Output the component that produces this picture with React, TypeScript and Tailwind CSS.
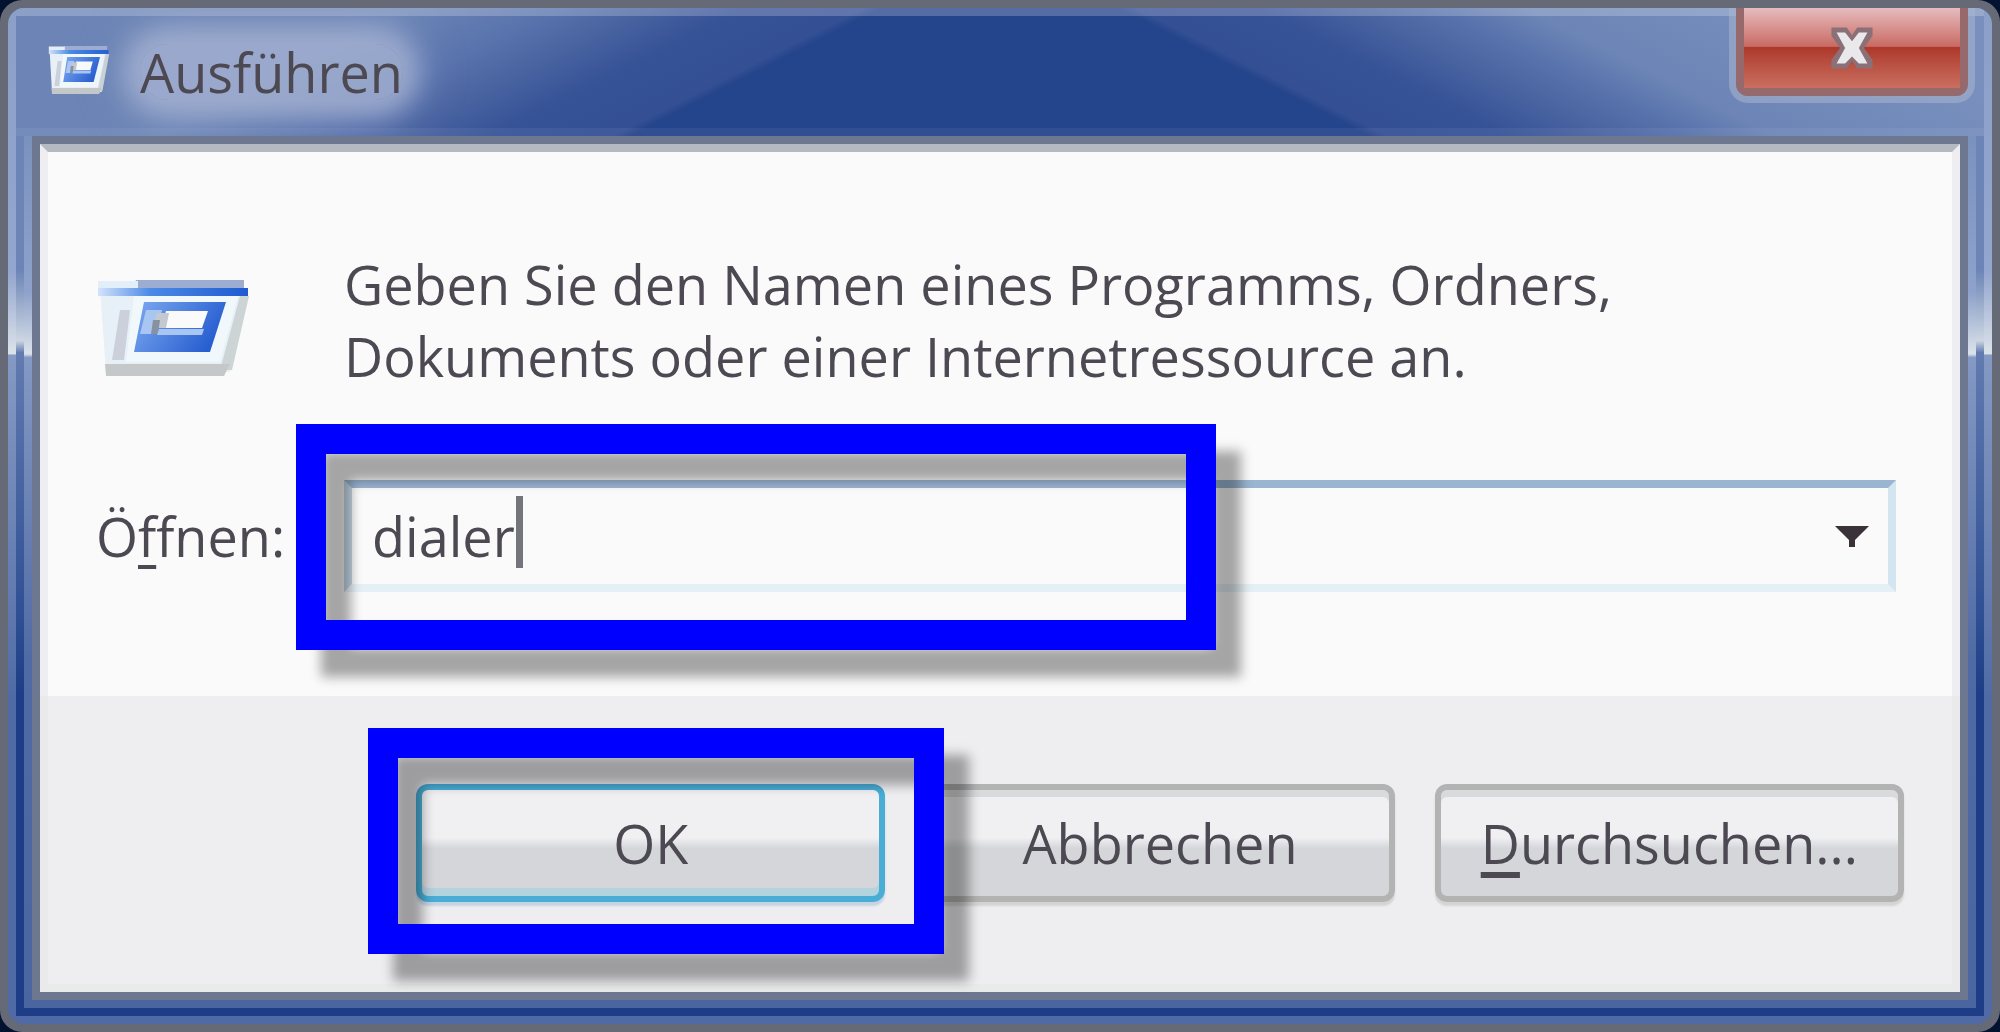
import type { ReactNode } from "react";
import clsx from "clsx";

interface DialogButtonProps {
  children: ReactNode;
  isDefault?: boolean;
}

interface RunIconProps {
  className: string;
}

const RunIcon = ({ className }: RunIconProps) => (
  <svg viewBox="0 0 160 104" preserveAspectRatio="none" className={className} aria-hidden="true">
    <defs>
      <linearGradient id="runBar" x1="0" x2="1">
        <stop offset="0" stopColor="#d3e3fa" />
        <stop offset="0.35" stopColor="#4b8ae6" />
        <stop offset="1" stopColor="#1f5bd0" />
      </linearGradient>
      <linearGradient id="runRing" x1="0" x2="1" y2="0.4">
        <stop offset="0" stopColor="#7eaaf0" />
        <stop offset="1" stopColor="#285fd0" />
      </linearGradient>
    </defs>
    <path d="M4 8H152L134 92H10Z" fill="#e6f0f6" />
    <path d="M144 16H153L136 90H124Z" fill="#cdd4d6" />
    <path d="M24 30H34L28 80H16Z" fill="#ccd0da" />
    <path d="M38 16H142L124 82H30Z" fill="#f1f8fc" />
    <path d="M9 84H134L128 96H10Z" fill="#c5c8c8" />
    <path d="M40 0H148V8H36Z" fill="#9dadd2" />
    <path d="M2 1H42V8H2Z" fill="#e2eef8" />
    <path d="M2 8H152V16H2Z" fill="url(#runBar)" />
    <path d="M48 22H130L114 72H38Z" fill="url(#runRing)" />
    <path d="M70 31H112L106 48H66Z" fill="#fafafa" />
    <path d="M50 30H66L60 54H44Z" fill="#a9c6f2" />
    <path d="M61 33H73L70 48H57Z" fill="#c3c9cf" />
    <path d="M57 40H64L62 54H55Z" fill="#8791a0" />
    <path d="M63 49H108L106 55H61Z" fill="#a9c6f2" />
  </svg>
);

const CloseIcon = () => (
  <svg viewBox="0 0 56 52" className="size-12" aria-hidden="true">
    <path
      d="M4 2H22L28 11L34 2H52V12L42 26L52 40V50H34L28 41L22 50H4V40L14 26L4 12Z"
      fill="#8b7078"
    />
    <path d="M10 8H20L28 18L36 8H46L36 26L46 44H36L28 36L20 44H10L20 26Z" fill="#e9e8ea" />
  </svg>
);

// Markierung um ein Element
const Highlight = ({ className }: { className: string }) => (
  <div
    className={clsx(
      "pointer-events-none absolute z-10 border-[30px] border-[#0000ff] drop-shadow-[25px_27px_6px_rgba(0,0,0,0.34)]",
      className,
    )}
  />
);

const DialogButton = ({ children, isDefault = false }: DialogButtonProps) => (
  <button
    type="button"
    className={clsx(
      "h-[118px] w-full rounded-[12px] border-[6px] bg-linear-to-b from-[#f0f0f3] from-45% to-[#d4d6d9] to-55%",
      isDefault
        ? "border-[#49add6] shadow-[inset_0_-8px_#b3d3de,0_4px_2px_#c5d4e2]"
        : "border-[#b3b3b4] shadow-[inset_0_7px_#d9dadb,0_4px_2px_#d4d4d2]",
    )}
  >
    {children}
  </button>
);

const TitleBar = () => (
  <header className="flex h-32 items-start justify-between bg-[linear-gradient(153deg,#6c85b6_180px,#5973ad_245px,#4862a0_290px,#365397_330px,#344f94_385px,#24458b_393px),linear-gradient(207deg,#7990be_80px,#6c85b6_210px,#5973ad_245px,#4862a0_290px,#365397_330px,#344f94_385px,#24458b_393px)] bg-[length:50.1%_100%] [background-position:left,right] bg-no-repeat pr-4 pl-8 shadow-[inset_0_8px_rgba(255,255,255,0.22),inset_0_-8px_rgba(255,255,255,0.06)]">
    <div className="flex h-full items-center">
      <RunIcon className="h-13 w-16" />
      <h1 className="ml-7 rounded-full bg-[#a8b4d3]/75 leading-[56px] shadow-[0_0_24px_16px_rgba(168,180,211,0.75),0_0_48px_20px_rgba(168,180,211,0.3)]">
        Ausführen
      </h1>
    </div>
    <button
      type="button"
      aria-label="Schließen"
      className="flex h-[88px] w-[232px] items-center justify-center rounded-b-[12px] border-x-8 border-b-8 border-[#966a6d] bg-linear-to-b from-[#e5bcbe] via-[#c96c66] via-47% to-[#cf7a6a] shadow-[0_0_0_7px_rgba(170,180,205,0.55)]"
    >
      <span className="flex h-full w-full items-center justify-center bg-linear-to-b from-transparent from-48% via-[#ad382b] via-49% to-[#c96f60]">
        <CloseIcon />
      </span>
    </button>
  </header>
);

const App = () => {
  return (
    <div className="min-h-screen bg-[#03122e] font-['Open_Sans','Noto_Sans',sans-serif] text-[54px] leading-[72px] text-[#4d4952] [font-variant-ligatures:none]">
      <div className="flex min-h-screen flex-col rounded-[22px] bg-[#656a76] p-2">
        {/* Glasrahmen */}
        <div className="flex flex-1 flex-col overflow-hidden rounded-[16px] bg-[linear-gradient(#8c9fc9,#93a6cf_26%,#dbe2ea_34%,#8499c4_34.2%,#5e78ae_60%,#506aa5_68%)] px-2 pb-2">
          <div className="flex flex-1 flex-col bg-[linear-gradient(#6c85b6_26%,#ccd6e2_33%,#627bb0_34.2%,#2f5094_60%,#1d3d86_68%)] pb-2">
            <TitleBar />
            <div className="mx-2 flex flex-1 flex-col bg-[linear-gradient(#7b92bf,#8ea2cb_18%,#dbe2ea_25%,#8499c4_25.4%,#506aa5_60%,#4a659f_100%)] px-2 pb-2">
              <form
                className="flex flex-1 flex-col border-8 border-[#6d7790]"
                onSubmit={(e) => e.preventDefault()}
              >
                <main className="grid grid-cols-[248px_1fr] items-center gap-y-22 border-x-8 border-t-8 border-x-[#eeeef2] border-t-[#b5b9c2] bg-[#fafafa] pt-24 pr-14 pb-26 pl-12">
                  <RunIcon className="mt-6 h-26 w-40" />
                  <p>
                    Geben Sie den Namen eines Programms, Ordners,
                    <br />
                    Dokuments oder einer Internetressource an.
                  </p>

                  <label htmlFor="command">
                    Ö<span className="underline decoration-4 underline-offset-8">f</span>fnen:
                  </label>
                  <div className="relative flex h-28 border-8 border-t-[#9ab5d2] border-r-[#d3e5f1] border-b-[#e5f0f6] border-l-[#c3d5e3]">
                    <input
                      id="command"
                      type="text"
                      defaultValue="dialer"
                      className="min-w-0 flex-1 bg-transparent pl-5 outline-none"
                    />
                    {/* Textcursor */}
                    <span className="absolute top-2 left-41 h-18 w-[7px] bg-[#74747b]" />
                    <button type="button" aria-label="Verlauf" className="flex w-18 items-center justify-center">
                      <svg viewBox="0 0 40 24" className="h-6 w-10" aria-hidden="true">
                        <path d="M3 2H37L31 8L23 16V23H17V16L9 8Z" fill="#3a3238" />
                      </svg>
                    </button>
                    <Highlight className="-top-16 -left-14 h-[226px] w-[920px]" />
                  </div>
                </main>

                <footer className="grid flex-1 grid-cols-3 gap-10 border-x-8 border-b-8 border-[#e8ebea] bg-[#eeeef1] pt-22 pr-12 pb-18 pl-[368px]">
                  <div className="relative">
                    <DialogButton isDefault>OK</DialogButton>
                    <Highlight className="-top-14 -left-12 h-[226px] w-[576px]" />
                  </div>
                  <DialogButton>Abbrechen</DialogButton>
                  <DialogButton>
                    <span className="underline decoration-6 underline-offset-8">D</span>urchsuchen...
                  </DialogButton>
                </footer>
              </form>
            </div>
          </div>
        </div>
      </div>
    </div>
  );
};

export default App;
